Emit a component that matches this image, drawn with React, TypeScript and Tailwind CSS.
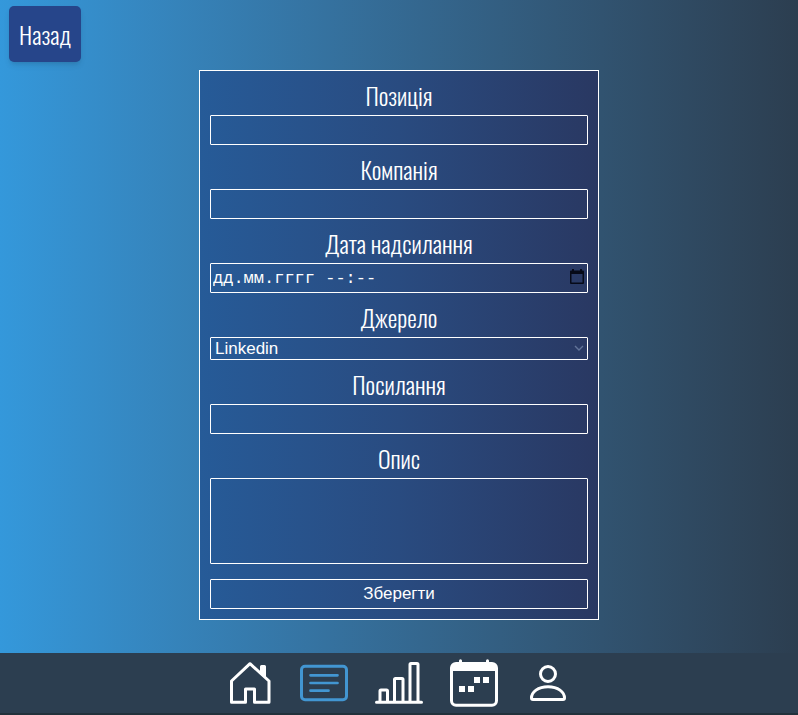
import type { ReactNode } from "react";

const field =
  "block w-full rounded-[1px] border border-white bg-transparent text-white outline-none";
const sans = "font-['Liberation_Sans',Arial,sans-serif]";

function Field({ id, label, children }: { id: string; label: string; children: ReactNode }) {
  return (
    <div className="flex flex-col">
      <label
        htmlFor={id}
        className="h-[34px] text-center font-[Oswald,'Liberation_Sans_Narrow','Open_Sans_Condensed',sans-serif] text-2xl font-light leading-7"
      >
        {label}
      </label>
      {children}
    </div>
  );
}

function NavIcon({ label, active, children }: { label: string; active?: boolean; children: ReactNode }) {
  return (
    <a href="#" aria-label={label} className={active ? "text-[#4296d2]" : "text-white"}>
      <svg
        viewBox="0 0 50 50"
        className="block size-[50px]"
        fill="none"
        stroke="currentColor"
        strokeWidth="3"
        strokeLinecap="round"
        strokeLinejoin="round"
      >
        {children}
      </svg>
    </a>
  );
}

export default function App() {
  return (
    <div className="flex min-h-screen flex-col bg-linear-to-r from-[#3498db] to-[#2c3e50] text-white">
      <header className="px-[9px] pt-1.5">
        <button
          type="button"
          className="h-14 rounded-[5px] bg-[#26458a] px-2.5 font-[Oswald,'Liberation_Sans_Narrow','Open_Sans_Condensed',sans-serif] text-2xl font-light shadow-md"
        >
          Назад
        </button>
      </header>

      <main className="flex flex-1 justify-center px-4 pt-2 pb-8">
        <form
          className="flex w-full max-w-[400px] flex-col gap-2.5 self-start border border-white bg-linear-to-r from-[#265b98] via-[#294b80] to-[#293862] p-2.5"
          onSubmit={(e) => e.preventDefault()}
        >
          <Field id="position" label="Позиція">
            <input id="position" type="text" className={`${field} ${sans} h-[30px] px-1`} />
          </Field>
          <Field id="company" label="Компанія">
            <input id="company" type="text" className={`${field} ${sans} h-[30px] px-1`} />
          </Field>
          <Field id="date" label="Дата надсилання">
            <div className="relative">
              <input
                id="date"
                type="text"
                placeholder="дд.мм.гггг --:--"
                className={`${field} h-[30px] pr-8 pl-0.5 font-['Liberation_Mono',monospace] text-[17px] placeholder:text-white placeholder:opacity-100`}
              />
              <svg viewBox="0 0 16 16" className="pointer-events-none absolute top-1.5 right-[3px] size-4">
                <path
                  fill="#060a18"
                  fillRule="evenodd"
                  d="M3 0h2v1.500h6V0h2v1.500h1a1 1 0 0 1 1 1V14a1 1 0 0 1-1 1H2a1 1 0 0 1-1-1V2.500a1 1 0 0 1 1-1h1ZM2.500 5v8.500h11V5Z"
                />
              </svg>
            </div>
          </Field>
          <Field id="source" label="Джерело">
            <div className="relative">
              <select id="source" className={`${field} ${sans} h-[23px] appearance-none px-1 text-[17px] leading-5`}>
                <option className="text-black">Linkedin</option>
              </select>
              <svg
                viewBox="0 0 10 10"
                className="pointer-events-none absolute top-1.5 right-1 size-2.5"
                fill="none"
                stroke="#627499"
                strokeWidth="1.4"
              >
                <path d="m1 3 4 4 4-4" />
              </svg>
            </div>
          </Field>
          <Field id="link" label="Посилання">
            <input id="link" type="text" className={`${field} ${sans} h-[30px] px-1`} />
          </Field>
          <Field id="description" label="Опис">
            <textarea id="description" className={`${field} ${sans} h-[86px] resize-none px-1`} />
          </Field>
          <button type="submit" className={`${field} ${sans} mt-[5px] h-[30px] text-[17px]`}>
            Зберегти
          </button>
        </form>
      </main>

      <nav className="flex justify-center gap-[25px] border-b-2 border-[#22313b] bg-[#2c3e50] py-[5px]">
        <NavIcon label="Головна">
          <path d="M7.500 44.300V23L26 5.700 45 23v21.300H30.500V31h-9v13.300Z" />
          <path d="M37.500 8.500h3v9.500l-3-3Z" fill="currentColor" />
        </NavIcon>
        <NavIcon label="Вакансії" active>
          <rect x="2.500" y="8.200" width="45" height="33.600" rx="3.500" />
          <path d="M11.500 17.300h27M11.500 25h27M11.500 32.700h18" strokeWidth="2.700" />
        </NavIcon>
        <NavIcon label="Статистика">
          <path d="M2.500 44.300h45M6 44.300V33q0-1 1-1h5.500q1 0 1 1v11.300M20.500 44.300V21.500q0-1 1-1H28q1 0 1 1v22.800M36 44.300V6.500q0-1 1-1h6q1 0 1 1v37.800" />
        </NavIcon>
        <NavIcon label="Календар">
          <rect x="2.500" y="5.500" width="45" height="41.700" rx="4.500" />
          <path d="M2 13V9.500Q2 5 6.500 5h37Q48 5 48 9.500V13Z" fill="currentColor" stroke="none" />
          <path d="M11.500 2.700V6M38.500 2.700V6" />
          <path
            d="M10 28h6v6h-6ZM19 28h6v6h-6ZM25 19h6v6h-6ZM34 19h6v6h-6Z"
            fill="currentColor"
            stroke="none"
          />
        </NavIcon>
        <NavIcon label="Профіль">
          <circle cx="24" cy="16" r="7.500" />
          <path d="M7.500 40c0-6 6.500-11.300 16.500-11.300S40.500 34 40.500 40q0 1.500-1.500 1.500H9q-1.500 0-1.500-1.500Z" />
        </NavIcon>
      </nav>
    </div>
  );
}
